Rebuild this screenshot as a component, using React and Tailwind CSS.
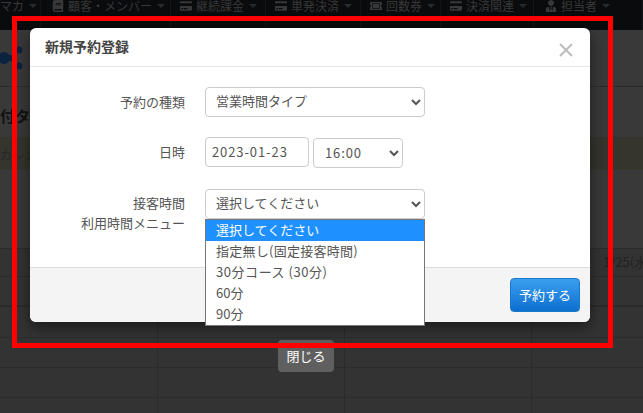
import React from "react";
import { FaCreditCard, FaBook, FaTicketAlt, FaUserTie } from "react-icons/fa";

const navItems = [
  { label: "マカ", icon: null, width: "w-[41px] pl-0" },
  { label: "顧客・メンバー", icon: FaBook, width: "w-[130px] pl-[11px]" },
  { label: "継続課金", icon: FaCreditCard, width: "w-[95px] pl-[9px]" },
  { label: "単発決済", icon: FaCreditCard, width: "w-[95px] pl-[9px]" },
  { label: "回数券", icon: FaTicketAlt, width: "w-[80px] pl-[9px]" },
  { label: "決済関連", icon: FaCreditCard, width: "w-[93px] pl-[9px]" },
  { label: "担当者", icon: FaUserTie, width: "w-[109px] pl-[11px]" },
];

const options = [
  { label: "選択してください", spacing: "" },
  { label: "指定無し(固定接客時間)", spacing: "tracking-[0.25px]" },
  { label: "30分コース (30分)", spacing: "tracking-[0.55px]" },
  { label: "60分", spacing: "" },
  { label: "90分", spacing: "" },
];

const selectClass =
  "h-[30px] rounded border border-[#ccc] bg-white pb-[3px] text-[13px] text-[#555] outline-none";

const TableRow = ({ className = "" }) => (
  <div className={`grid grid-cols-[158px_187px_187px_1fr] border-b border-[#2b2b2b] ${className}`}>
    <div className="border-r border-[#2b2b2b]" />
    <div className="border-r border-[#2b2b2b]" />
    <div className="border-r border-[#2b2b2b]" />
    <div />
  </div>
);

export default function App() {
  return (
    <div className="relative h-[413px] w-[643px] overflow-hidden bg-[#333] font-['Noto_Sans_CJK_JP','Liberation_Sans',sans-serif]">
      {/* page behind the dim layer */}
      <div className="flex h-[30px] items-start bg-[#0a0b0d] text-[12px] leading-[12px] text-[#383838]">
        {navItems.map((item) => {
          const Icon = item.icon;
          return (
            <div key={item.label} className={`flex h-full items-start border-r border-[#141518] ${item.width}`}>
              {Icon && <Icon className="mr-[4px] shrink-0 text-[12px]" />}
              <span className="whitespace-nowrap">{item.label}</span>
              <span className="ml-[5px] mt-[4px] h-0 w-0 border-x-[4px] border-t-[4px] border-x-transparent border-t-[#2a2a2a]" />
            </div>
          );
        })}
      </div>

      <div className="flex h-[57px] items-center border-b border-[#2b2b2b] bg-[#393939]">
        <svg width="24" height="24" viewBox="0 0 24 24" className="text-[#0c2340]" fill="currentColor">
          <circle cx="4" cy="12" r="6" />
          <circle cx="19" cy="4" r="3.5" />
          <circle cx="19" cy="20" r="3.5" />
          <rect x="6" y="9" width="10" height="6" />
        </svg>
      </div>

      <div className="h-[161px] bg-[#393939] pt-[19px]">
        <div className="text-[15px] font-bold leading-5 text-[#111]">付ター</div>
        <div className="mt-[11px] flex h-[33px] items-center bg-[#35352e] pt-[2px] text-[12px] text-[#2b2620]">カレン</div>
      </div>

      <div className="h-[29px] border-b border-t border-[#2b2b2b] pl-[603px] pt-[5px] text-[13px] leading-4 text-[#222] whitespace-nowrap">
        1/25(水)
      </div>
      <div className="h-[30px] border-b-2 border-[#2b2b2b]" />
      <TableRow className="h-[31px]" />
      <TableRow className="h-[30px]" />
      <TableRow className="h-[30px]" />
      <TableRow className="h-[30px]" />

      {/* close button under the modal */}
      <button className="absolute left-[278px] top-[340px] h-[32px] w-[56px] rounded bg-[#5f5f5f] text-[13px] text-white">
        閉じる
      </button>

      {/* modal */}
      <div className="absolute left-[30px] top-[28px] h-[294px] w-[560px] rounded-md bg-white shadow-[0_5px_15px_rgba(0,0,0,0.5)]">
        <div className="flex h-[39px] items-start justify-between border-b border-[#e5e5e5] pl-[15px] pr-[17px]">
          <h4 className="mt-[8px] text-[14px] font-bold leading-5 text-[#444]">新規予約登録</h4>
          <svg width="14" height="14" viewBox="0 0 14 14" className="mt-[15px] text-[#bdbdbd]" stroke="currentColor" strokeWidth="2" fill="none">
            <path d="M1 1l12 12M13 1L1 13" />
          </svg>
        </div>

        <div className="relative h-[200px] pt-[20px]">
          <div className="flex h-[30px] items-center">
            <label className="w-[155px] pb-[1px] text-right text-[13px] text-[#555]">予約の種類</label>
            <select className={`${selectClass} ml-[20px] w-[220px] pl-[6px]`} defaultValue="営業時間タイプ">
              <option>営業時間タイプ</option>
            </select>
          </div>
          <div className="mt-[20px] flex h-[30px] items-center">
            <label className="w-[155px] pb-[1px] text-right text-[13px] text-[#555]">日時</label>
            <input
              readOnly
              value="2023-01-23"
              className="ml-[20px] h-[30px] w-[104px] rounded border border-[#ccc] bg-white pb-[2px] pl-[6px] text-[13px] tracking-[0.9px] text-[#555] outline-none"
            />
            <select className={`${selectClass} ml-[4px] mt-[1px] w-[90px] !pb-0 pl-[7px] tracking-[0.9px]`} defaultValue="16:00">
              <option>16:00</option>
            </select>
          </div>
          <div className="mt-[22px] flex items-start">
            <div className="w-[155px] text-right text-[13px] leading-[20px] text-[#555]">
              <div className="mt-[4px]">接客時間</div>
              <div>利用時間メニュー</div>
            </div>
            <div className="relative ml-[20px] w-[220px]">
              <select className={`${selectClass} w-full pl-[6px]`} defaultValue={options[0].label}>
                <option>{options[0].label}</option>
              </select>
              {/* open dropdown list */}
              <ul className="absolute left-0 top-[30px] z-10 w-full border border-[#767676] bg-white text-[13px] text-[#555]">
                {options.map((option, index) => (
                  <li
                    key={option.label}
                    className={`h-[21px] pl-[10px] leading-[19px] ${option.spacing} ${index === 0 ? "bg-[#1e90ff] text-white" : ""}`}
                  >
                    {option.label}
                  </li>
                ))}
              </ul>
            </div>
          </div>
        </div>

        <div className="flex h-[55px] items-start justify-end rounded-b-md border-t border-[#ddd] bg-[#f4f4f4] pr-[10px] pt-[10px]">
          <button className="h-[34px] w-[70px] rounded border border-[#1a78c8] bg-gradient-to-b from-[#3a9fee] to-[#0a6fd0] text-[13px] text-white">
            予約する
          </button>
        </div>
      </div>

      {/* red annotation frame */}
      <div className="pointer-events-none absolute left-[12px] top-[16px] z-20 h-[332px] w-[601px] border-[5px] border-[#f00]" />
    </div>
  );
}
